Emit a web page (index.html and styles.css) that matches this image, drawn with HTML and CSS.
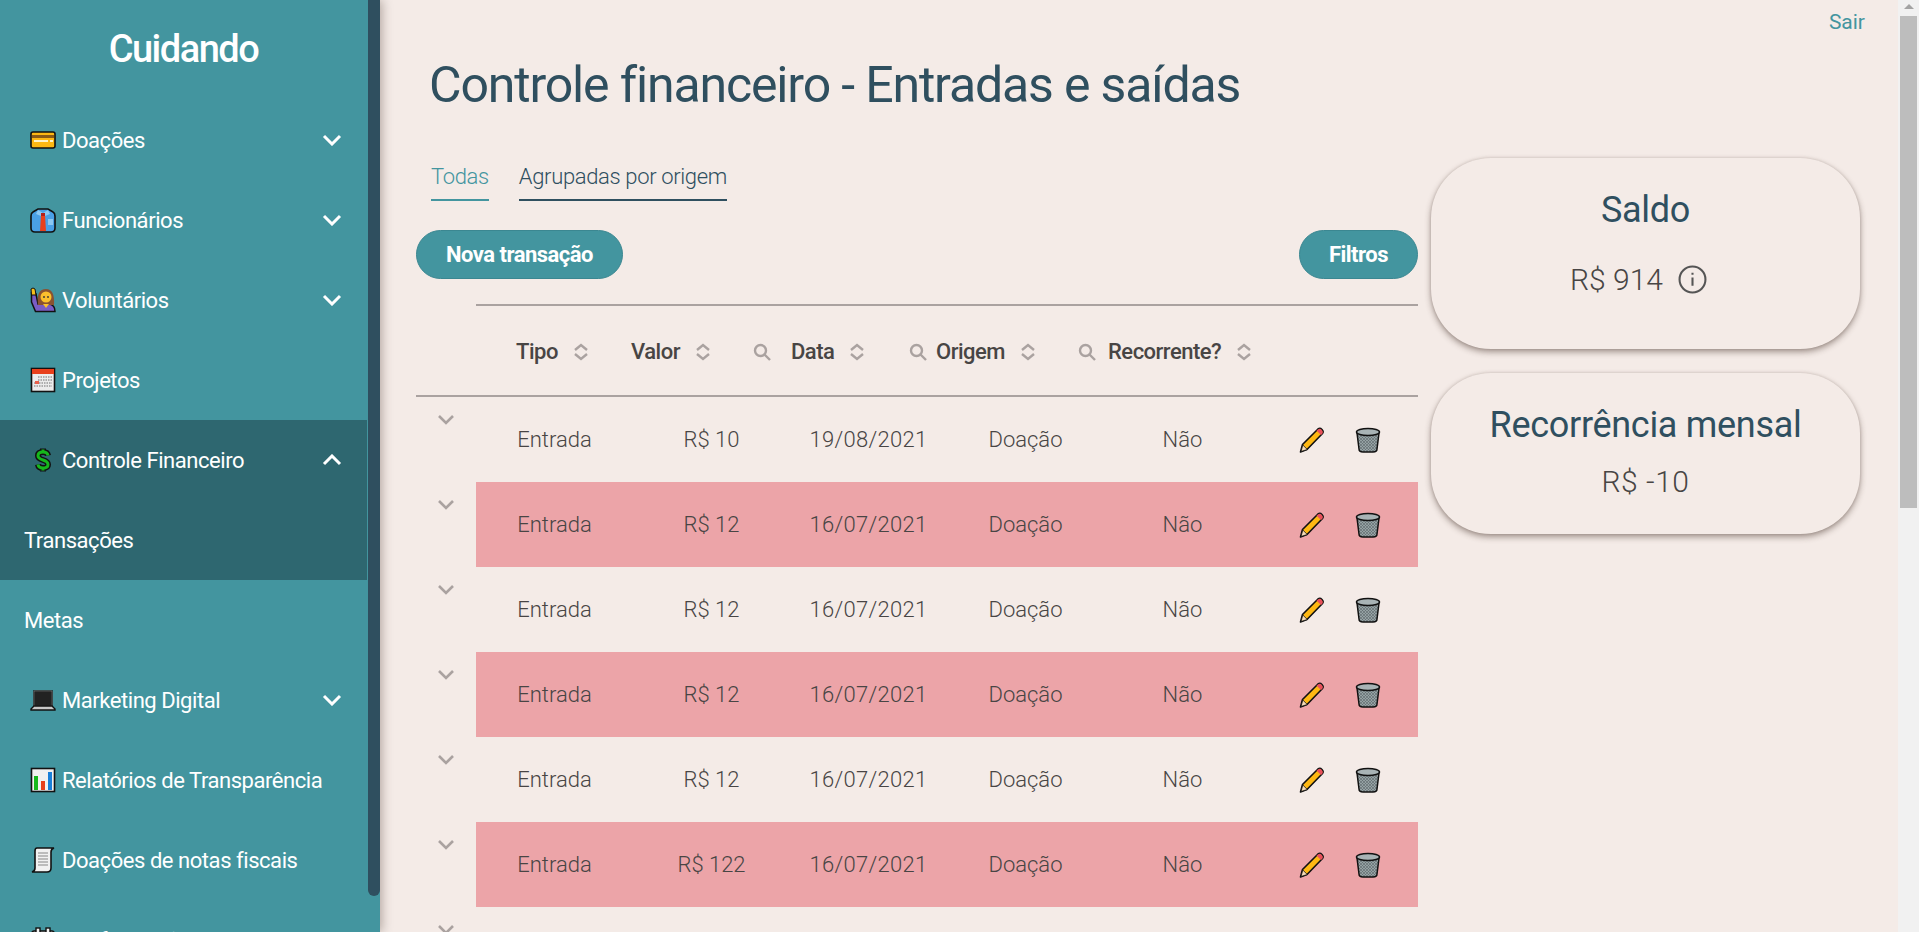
FILE: index.html
```html
<!DOCTYPE html>
<html lang="pt-BR">

<head>
    <title>Cuidando</title>
    <meta name="viewport" content="width=device-width, initial-scale=1" />
    <link rel="stylesheet" href="styles.css">
</head>

<body>
    <div class="app">
        <aside class="sidebar">
            <nav class="sidebar-scroll">
                <h2 class="logo">Cuidando</h2>

                <a class="menu-item">
                    <svg class="emoji" viewBox="0 0 26 26"><rect x="1" y="5" width="24" height="16" rx="2" fill="#fdb813" stroke="#111" stroke-width="1.6"/><rect x="2" y="8" width="22" height="3" fill="#8a5a16"/><rect x="4" y="13" width="14" height="2" fill="#fff3c8"/><rect x="20" y="13" width="3" height="2" fill="#fff3c8"/></svg>
                    <span>Doações</span>
                    <svg class="chevron" viewBox="0 0 20 12"><path d="M2 2l8 8 8-8"/></svg>
                </a>
                <a class="menu-item">
                    <svg class="emoji" viewBox="0 0 26 26"><path d="M8 2h10l5 3q2 1 2 4v12q0 4-4 4H5q-4 0-4-4V9q0-3 2-4z" fill="#4aa0e6" stroke="#111" stroke-width="1.6"/><path d="M8 3l5 3 5-3 2 4-5 2-2-1-2 1-5-2z" fill="#8cc8f2"/><path d="M11 8h4l1 16h-6z" fill="#e8401c"/><rect x="11" y="6" width="4" height="3" fill="#b3201a"/><rect x="18" y="12" width="5" height="6" fill="#8cc8f2"/></svg>
                    <span>Funcionários</span>
                    <svg class="chevron" viewBox="0 0 20 12"><path d="M2 2l8 8 8-8"/></svg>
                </a>
                <a class="menu-item">
                    <svg class="emoji" viewBox="0 0 26 26"><path d="M1.500 6v9l4 9.500h19.500q0-6-5-7.500H8L6 7z" fill="#7b5cc4" stroke="#111" stroke-width="1.500"/><path d="M1 2q2-2 4 0l1 6H1.500z" fill="#f7c01c" stroke="#111" stroke-width="1"/><path d="M8 18q-2-16 8-16 9 0 8 16z" fill="#8a5230"/><circle cx="16" cy="10" r="5.500" fill="#fbc02d"/><circle cx="14" cy="10" r=".9" fill="#333"/><circle cx="18" cy="10" r=".9" fill="#333"/><path d="M13 17h6l-3 4z" fill="#fbc02d"/></svg>
                    <span>Voluntários</span>
                    <svg class="chevron" viewBox="0 0 20 12"><path d="M2 2l8 8 8-8"/></svg>
                </a>
                <a class="menu-item">
                    <svg class="emoji" viewBox="0 0 26 26"><rect x="1.500" y="1.500" width="23" height="23" fill="#ececec" stroke="#111" stroke-width="1.600"/><rect x="2" y="2" width="22" height="5" fill="#e8401c"/><path d="M8 10h14M8 13h14M4 16h18M4 19h18" stroke="#999" stroke-width="1.500" stroke-dasharray="1.500 1"/><rect x="5" y="14" width="4" height="3" fill="#e8604c"/></svg>
                    <span>Projetos</span>
                </a>

                <div class="menu-group">
                    <a class="menu-item">
                        <svg class="emoji" viewBox="0 0 26 26"><g fill="none" stroke-linecap="butt"><path d="M18 8.500Q17.500 5 13 5 8 5 8 8.800 8 11.500 13 13 18 14.500 18 17.500 18 21 13 21 8.500 21 8 17.500M13 1.500v3M13 21.500v3" stroke="#111" stroke-width="6"/><path d="M18 8.500Q17.500 5 13 5 8 5 8 8.800 8 11.500 13 13 18 14.500 18 17.500 18 21 13 21 8.500 21 8 17.500M13 2.500v3M13 20.500v3" stroke="#16b81c" stroke-width="3"/></g></svg>
                        <span>Controle Financeiro</span>
                        <svg class="chevron" viewBox="0 0 20 12"><path d="M2 10l8-8 8 8"/></svg>
                    </a>
                    <a class="menu-item sub">Transações</a>
                </div>
                <a class="menu-item sub">Metas</a>

                <a class="menu-item">
                    <svg class="emoji" viewBox="0 0 26 26"><path d="M4 4h18v15H4z" fill="#222" stroke="#111" stroke-width="1.600"/><path d="M4 4h18v15H4z" fill="none" stroke="#777" stroke-width=".8"/><path d="M4 19h18l3 3v1H1v-1z" fill="#c8c8c8" stroke="#111" stroke-width="1.400"/></svg>
                    <span>Marketing Digital</span>
                    <svg class="chevron" viewBox="0 0 20 12"><path d="M2 2l8 8 8-8"/></svg>
                </a>
                <a class="menu-item">
                    <svg class="emoji" viewBox="0 0 26 26"><rect x="1.500" y="1.500" width="23" height="23" fill="#f1f1f1" stroke="#111" stroke-width="1.600"/><rect x="4" y="9" width="4" height="14" fill="#16b81c"/><rect x="11" y="14" width="4" height="9" fill="#e8401c"/><rect x="18" y="5" width="4" height="18" fill="#1a7fd8"/></svg>
                    <span>Relatórios de Transparência</span>
                </a>
                <a class="menu-item">
                    <svg class="emoji" viewBox="0 0 26 26"><path d="M7 1h17q-3 1-3 4v16q0 4-4 4H2q3-1 3-4V4q0-3 2-3z" fill="#f1f1f1" stroke="#111" stroke-width="1.600"/><path d="M8 6h10M8 9h10M8 12h10M8 15h10M8 18h10" stroke="#aaa" stroke-width="1.400"/></svg>
                    <span>Doações de notas fiscais</span>
                </a>
                <a class="menu-item">
                    <svg class="emoji" viewBox="0 0 26 26"><rect x="2" y="4" width="22" height="20" rx="2" fill="#f1f1f1" stroke="#111" stroke-width="1.600"/><rect x="6" y="1" width="4" height="6" fill="#f1f1f1" stroke="#111" stroke-width="1.400"/><rect x="16" y="1" width="4" height="6" fill="#f1f1f1" stroke="#111" stroke-width="1.400"/></svg>
                    <span>Configurações</span>
                </a>
            </nav>
            <div class="sidebar-thumb"></div>
        </aside>

        <main class="content">
            <a class="logout">Sair</a>
            <h1 class="page-title">Controle financeiro - Entradas e saídas</h1>

            <div class="columns">
                <section class="left">
                    <div class="tabs">
                        <a class="tab active">Todas</a>
                        <a class="tab">Agrupadas por origem</a>
                    </div>

                    <div class="actions">
                        <button class="btn">Nova transação</button>
                        <button class="btn">Filtros</button>
                    </div>

                    <div class="thead">
                        <div class="th w-tipo"><span>Tipo</span><svg class="sort" viewBox="0 0 16 18"><path d="M2 7l6-5 6 5M2 11l6 5 6-5"/></svg></div>
                        <div class="th w-valor"><span>Valor</span><svg class="sort" viewBox="0 0 16 18"><path d="M2 7l6-5 6 5M2 11l6 5 6-5"/></svg></div>
                        <div class="th w-data"><svg class="search" viewBox="0 0 18 18"><circle cx="7.500" cy="7.500" r="5.500"/><path d="M11.500 11.500l5.500 5.500"/></svg><span>Data</span><svg class="sort" viewBox="0 0 16 18"><path d="M2 7l6-5 6 5M2 11l6 5 6-5"/></svg></div>
                        <div class="th w-origem"><svg class="search" viewBox="0 0 18 18"><circle cx="7.500" cy="7.500" r="5.500"/><path d="M11.500 11.500l5.500 5.500"/></svg><span>Origem</span><svg class="sort" viewBox="0 0 16 18"><path d="M2 7l6-5 6 5M2 11l6 5 6-5"/></svg></div>
                        <div class="th w-rec"><svg class="search" viewBox="0 0 18 18"><circle cx="7.500" cy="7.500" r="5.500"/><path d="M11.500 11.500l5.500 5.500"/></svg><span>Recorrente?</span><svg class="sort" viewBox="0 0 16 18"><path d="M2 7l6-5 6 5M2 11l6 5 6-5"/></svg></div>
                    </div>

                    <div id="rows"></div>
                </section>

                <aside class="cards">
                    <div class="card saldo">
                        <h3>Saldo</h3>
                        <p>R$ 914 <svg class="info" viewBox="0 0 28 28"><circle cx="14" cy="14" r="12.500"/><path d="M14 12v8M14 7.500v2"/></svg></p>
                    </div>
                    <div class="card recorrencia">
                        <h3>Recorrência mensal</h3>
                        <p>R$ -10</p>
                    </div>
                </aside>
            </div>
        </main>

        <div class="page-scrollbar">
            <div class="arrow"></div>
            <div class="thumb"></div>
        </div>
    </div>

    <script>
        const data = [
            ['Entrada', 'R$ 10', '19/08/2021', 'Doação', 'Não', false],
            ['Entrada', 'R$ 12', '16/07/2021', 'Doação', 'Não', true],
            ['Entrada', 'R$ 12', '16/07/2021', 'Doação', 'Não', false],
            ['Entrada', 'R$ 12', '16/07/2021', 'Doação', 'Não', true],
            ['Entrada', 'R$ 12', '16/07/2021', 'Doação', 'Não', false],
            ['Entrada', 'R$ 122', '16/07/2021', 'Doação', 'Não', true],
            ['Entrada', 'R$ 12', '16/07/2021', 'Doação', 'Não', false]
        ];
        const pencil = '<svg class="act" viewBox="0 0 26 26"><path d="M1.500 25l2-7.500L19 2q2-1.500 4 .5t.5 4L8 22.500z" fill="#fdb813" stroke="#111" stroke-width="1.600" stroke-linejoin="round"/><path d="M19 2.500q2-1.500 3.800.5t.7 3.500l-1.500 1.500-4.500-4.500z" fill="#e8505c"/><path d="M2 24.500l1.800-6.500 4.500 4.500z" fill="#f5dcb8" stroke="#111" stroke-width=".8"/></svg>';
        const trash = '<svg class="act" viewBox="0 0 26 26"><defs><pattern id="mesh" width="3" height="3" patternUnits="userSpaceOnUse"><rect width="3" height="3" fill="#95a2a4"/><path d="M0 0l3 3M3 0L0 3" stroke="#5c6669" stroke-width=".6"/></pattern></defs><path d="M2 6l2 16q0 3 4 3h10q4 0 4-3l2-16z" fill="url(#mesh)" stroke="#111" stroke-width="1.500"/><ellipse cx="13" cy="5" rx="11.500" ry="3.500" fill="#a8b3b5" stroke="#111" stroke-width="1.500"/></svg>';
        const chevron = '<svg class="row-toggle" viewBox="0 0 18 12"><path d="M2 2l7 7 7-7"/></svg>';

        document.getElementById('rows').innerHTML = data.map(r => `
            <div class="row">
                <div class="expand">${chevron}</div>
                <div class="cells ${r[5] ? 'negative' : ''}">
                    <div>${r[0]}</div><div>${r[1]}</div><div class="date">${r[2]}</div><div>${r[3]}</div><div>${r[4]}</div>
                    <div class="row-actions">${pencil}${trash}</div>
                </div>
            </div>`).join('');
    </script>
</body>

</html>
```

FILE: styles.css
```css
* {
    box-sizing: border-box;
}

html,
body {
    margin: 0;
    height: 100%;
    overflow: hidden;
}

body {
    font-family: "Roboto", "Liberation Sans", sans-serif;
    background: #f4ebe7;
    color: #484544;
}

.app {
    display: flex;
    height: 932px;
}

/* sidebar */
.sidebar {
    position: relative;
    flex: 0 0 380px;
    background: #43959f;
    box-shadow: 2px 0 10px rgba(60, 40, 30, 0.35);
    overflow: hidden;
    z-index: 2;
}

.sidebar-scroll {
    width: 367px;
}

.sidebar-thumb {
    position: absolute;
    top: 0;
    right: 0;
    width: 12px;
    height: 896px;
    background: #2f4f5f;
    border-radius: 0 0 6px 6px;
}

.logo {
    margin: 0;
    height: 100px;
    padding-top: 25px;
    text-align: center;
    font-size: 38px;
    line-height: 48px;
    letter-spacing: -1.5px;
    font-weight: 500;
    color: #fff;
}

.menu-item {
    display: flex;
    align-items: center;
    height: 80px;
    padding: 0 25px 0 30px;
    font-size: 22px;
    letter-spacing: -0.45px;
    color: #fff;
}

.menu-item .emoji {
    flex: 0 0 26px;
    width: 26px;
    height: 26px;
    margin-right: 6px;
}

.menu-item span {
    flex: 1;
    white-space: nowrap;
}

.menu-item.sub {
    padding-left: 24px;
}

.menu-group {
    background: #2e6770;
}

.chevron {
    width: 20px;
    height: 12px;
    fill: none;
    stroke: #fff;
    stroke-width: 3;
}

/* main area */
.content {
    position: relative;
    flex: 1;
    min-width: 0;
    padding: 0 38px 0 36px;
    overflow: hidden;
}

.logout {
    position: absolute;
    top: 10px;
    right: 33px;
    font-size: 21px;
    color: #43959f;
}

.page-title {
    margin: 0;
    padding: 55px 0 0 13px;
    height: 150px;
    font-size: 50px;
    line-height: 60px;
    letter-spacing: -1.15px;
    font-weight: 400;
    color: #2f4f5f;
}

.columns {
    display: flex;
    align-items: flex-start;
    gap: 13px;
}

.left {
    flex: 0 0 1002px;
}

.tabs {
    display: flex;
    gap: 30px;
    height: 52px;
    padding: 10px 0 0 15px;
}

.tab {
    height: 41px;
    font-size: 22px;
    line-height: 34px;
    letter-spacing: -0.35px;
    font-weight: 300;
    color: #2f4f5f;
    border-bottom: 2px solid #2f4f5f;
}

.tab.active {
    color: #43959f;
    border-color: #43959f;
}

.actions {
    display: flex;
    justify-content: space-between;
    margin-top: 28px;
}

.btn {
    height: 49px;
    padding: 0 29px;
    border: 1px solid #3b8791;
    border-radius: 25px;
    background: #43959f;
    color: #fff;
    font-family: inherit;
    font-size: 22px;
    letter-spacing: -0.5px;
    font-weight: 700;
}

.thead {
    display: flex;
    align-items: center;
    height: 93px;
    margin-top: 25px;
    margin-left: 60px;
    padding-left: 40px;
    border-top: 2px solid #aaa2a0;
    position: relative;
    font-size: 22px;
    letter-spacing: -0.5px;
    font-weight: 500;
}

.thead::after {
    content: "";
    position: absolute;
    left: -60px;
    right: 0;
    bottom: 0;
    height: 2px;
    background: #aaa2a0;
}

.th {
    display: flex;
    align-items: center;
    flex: none;
}

.w-tipo { width: 115px; }
.w-valor { width: 122px; }
.w-data { width: 156px; }
.w-origem { width: 169px; }

.th span {
    white-space: nowrap;
    margin-right: 15px;
}

.search {
    flex: none;
    width: 18px;
    height: 18px;
    margin-right: 12px;
    fill: none;
    stroke: #aaa2a0;
    stroke-width: 2.400;
}

.w-data .search { margin-right: 20px; }
.w-origem .search { margin-right: 9px; }

.sort {
    flex: none;
    width: 16px;
    height: 18px;
    fill: none;
    stroke: #aaa2a0;
    stroke-width: 2.400;
}

.row {
    display: grid;
    grid-template-columns: 60px 1fr;
    height: 85px;
}

.expand {
    padding: 17px 0 0 21px;
}

.row-toggle {
    display: block;
    width: 18px;
    height: 12px;
    fill: none;
    stroke: #aaa2a0;
    stroke-width: 2.600;
}

.cells {
    display: grid;
    grid-template-columns: repeat(6, 1fr);
    align-items: center;
    text-align: center;
    font-size: 22px;
    font-weight: 300;
}

.cells .date {
    letter-spacing: 0.3px;
}

.cells.negative {
    background: #eca4a8;
}

.row-actions {
    display: flex;
    justify-content: center;
    gap: 30px;
}

.act {
    width: 26px;
    height: 26px;
}

/* right cards */
.cards {
    flex: 0 0 429px;
    display: flex;
    flex-direction: column;
    gap: 24px;
    margin-top: 8px;
}

.card {
    background: #f4ebe7;
    border-radius: 60px;
    text-align: center;
    box-shadow: 0 3px 6px rgba(60, 40, 30, 0.45), 0 0 3px rgba(60, 40, 30, 0.15);
}

.card h3 {
    margin: 0;
    font-size: 36px;
    letter-spacing: -0.3px;
    font-weight: 400;
    color: #2f4f5f;
}

.card p {
    margin: 0;
    font-size: 30px;
    line-height: 33px;
    font-weight: 300;
}

.saldo {
    height: 191px;
    padding-top: 30px;
}

.saldo h3 {
    line-height: 44px;
}

.saldo p {
    display: flex;
    justify-content: center;
    align-items: center;
    gap: 15px;
    margin-top: 31px;
    padding-right: 14px;
}

.recorrencia {
    height: 161px;
    padding-top: 29px;
}

.recorrencia h3 {
    line-height: 46px;
}

.recorrencia p {
    margin-top: 17px;
    letter-spacing: 0.5px;
}

.info {
    width: 29px;
    height: 29px;
    fill: none;
    stroke: #555;
    stroke-width: 2;
}

/* window scrollbar */
.page-scrollbar {
    flex: 0 0 21px;
    background: #f1f1f1;
    padding: 0 2px;
}

.page-scrollbar .arrow {
    width: 0;
    height: 0;
    margin: 4px auto 0;
    border-left: 5px solid transparent;
    border-right: 5px solid transparent;
    border-bottom: 5px solid #a3a3a3;
}

.page-scrollbar .thumb {
    height: 492px;
    margin-top: 7px;
    background: #bdbdbd;
}
```
